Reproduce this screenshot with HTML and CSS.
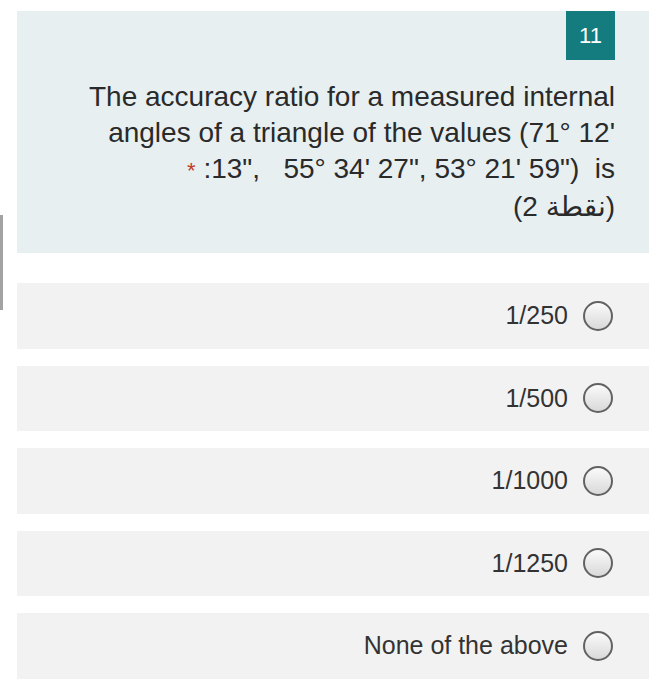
FILE: index.html
```html
<!DOCTYPE html>
<html lang="en">
<head>
<meta charset="utf-8">
<title>Question 11</title>
<link rel="stylesheet" href="styles.css">
</head>
<body>
<div class="page">
  <div class="scroll-indicator"></div>
  <section class="question-card">
    <div class="badge-row"><span class="badge">11</span></div>
    <div class="question">
      <div class="line">The accuracy ratio for a measured internal</div>
      <div class="line">angles of a triangle of the values (71° 12'</div>
      <div class="line line-pre"><span class="req">*</span> :13",   55° 34' 27", 53° 21' 59")  is</div>
      <div class="line" dir="ltr">(2 نقطة)</div>
    </div>
  </section>
  <div class="options">
    <label class="option"><span class="option-text">1/250</span><span class="radio"></span></label>
    <label class="option"><span class="option-text">1/500</span><span class="radio"></span></label>
    <label class="option"><span class="option-text">1/1000</span><span class="radio"></span></label>
    <label class="option"><span class="option-text">1/1250</span><span class="radio"></span></label>
    <label class="option"><span class="option-text">None of the above</span><span class="radio"></span></label>
  </div>
</div>
</body>
</html>
```
FILE: styles.css
```css
* { box-sizing: border-box; }
html, body { margin: 0; padding: 0; background: #ffffff; }
body {
  font-family: "Liberation Sans", Arial, "DejaVu Sans", sans-serif;
  color: #2e2e2e;
}
.page {
  position: relative;
  width: 664px;
  height: 700px;
  padding: 11px 15px 0 17px;
}
.scroll-indicator {
  position: absolute;
  left: 0;
  top: 215px;
  width: 3px;
  height: 95px;
  background: #a3a3a3;
}
.question-card {
  height: 242px;
  background: #e7eff1;
  padding-right: 34px;
}
.badge-row {
  display: flex;
  justify-content: flex-end;
}
.badge {
  width: 49px;
  height: 49px;
  background: #147c7f;
  color: #ffffff;
  font-size: 22px;
  line-height: 49px;
  text-align: center;
}
.question {
  margin-top: 19px;
  font-size: 28px;
  line-height: 36px;
  text-align: right;
  color: #2a2a2a;
}
.line { white-space: nowrap; }
.line-pre { white-space: pre; }
.req { color: #c5391f; font-size: 22px; }
.options {
  margin-top: 30px;
  display: flex;
  flex-direction: column;
  gap: 17px;
}
.option {
  height: 65.5px;
  background: #f2f2f2;
  display: flex;
  align-items: center;
  justify-content: flex-end;
  gap: 15px;
  padding-right: 36px;
}
.option-text {
  font-size: 25px;
  color: #333333;
}
.radio {
  width: 30px;
  height: 30px;
  border-radius: 50%;
  border: 2px solid #626262;
  background: linear-gradient(#fafafa, #d9d9d9);
}
```
